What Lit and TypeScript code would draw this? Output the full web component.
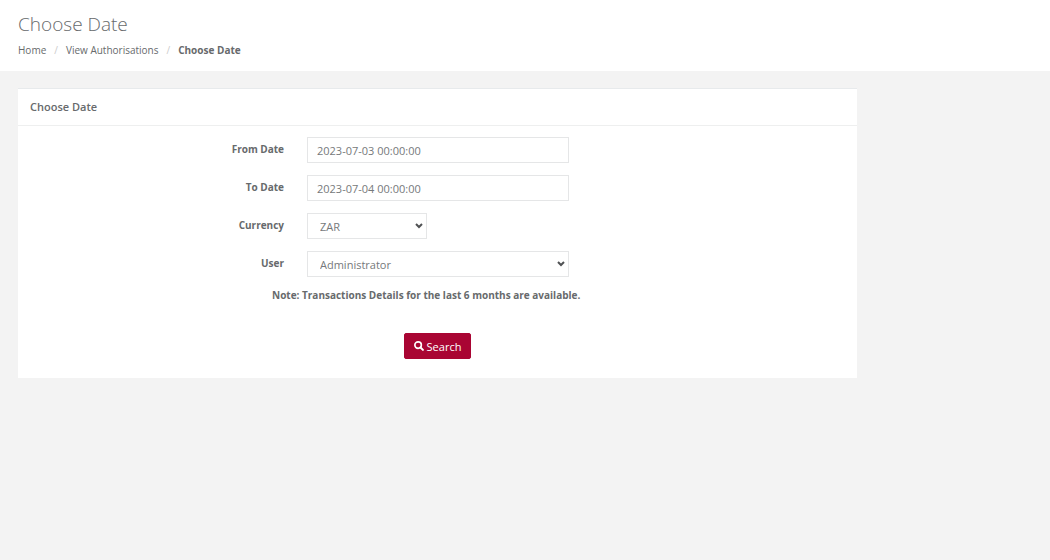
import { LitElement, html, css } from "lit";
import { customElement } from "lit/decorators.js";

@customElement("app-root")
export class AppRoot extends LitElement {
  static styles = css`
    :host {
      display: block;
      min-height: 100vh;
      background: #f3f3f3;
      color: #676a6c;
      font-family: "Open Sans", "Noto Sans", sans-serif;
      font-size: 11px;
      line-height: 18px;
    }
    * {
      box-sizing: border-box;
    }
    .heading {
      background: #fff;
      padding: 12px 18px;
    }
    h1 {
      margin: 0 0 4px;
      font-size: 19px;
      line-height: 25px;
      font-weight: 300;
    }
    .crumbs {
      display: flex;
      margin: 0;
      padding: 0;
      list-style: none;
      font-size: 10px;
    }
    .crumbs li + li::before {
      content: "/";
      color: #ccc;
      font-weight: 400;
      padding: 0 8px;
    }
    .crumbs a {
      color: inherit;
      text-decoration: none;
    }
    .current {
      font-weight: 700;
    }
    .content {
      display: grid;
      grid-template-columns: 839fr 175fr;
      padding: 17px 18px;
    }
    .panel {
      background: #fff;
      border-top: 1px solid #e7eaec;
    }
    h2 {
      margin: 0;
      padding: 9px 12px;
      border-bottom: 1px solid #eeefef;
      font-size: 11px;
      line-height: 18px;
      font-weight: 600;
    }
    form {
      display: flex;
      flex-direction: column;
      gap: 12px;
      padding: 11px 0 19px;
    }
    .row {
      display: grid;
      grid-template-columns: 266fr 262fr 265fr;
      column-gap: 23px;
    }
    .row label {
      text-align: right;
      font-size: 10px;
      line-height: 24px;
      font-weight: 700;
    }
    .control {
      width: 100%;
      height: 26px;
      margin: 0;
      padding: 0 9px;
      border: 1px solid #e5e6e7;
      border-radius: 0;
      background: #fff;
      color: #76797b;
      font: 11px "Open Sans", "Noto Sans", sans-serif;
    }
    select.control {
      appearance: none;
      padding: 0 16px 0 12px;
      background: #fff
        url("data:image/svg+xml,%3Csvg xmlns='http://www.w3.org/2000/svg' width='8' height='6' fill='none' stroke='%23505254' stroke-width='2'%3E%3Cpath d='M1 1l3 3 3-3'/%3E%3C/svg%3E")
        no-repeat right 3px center;
    }
    select.short {
      width: 120px;
    }
    .note {
      margin: 0;
      padding-left: 254px;
      font-size: 10px;
      line-height: 12px;
      font-weight: 700;
    }
    .actions {
      display: flex;
      justify-content: center;
      padding-top: 20px;
    }
    button {
      display: flex;
      align-items: center;
      gap: 3px;
      height: 26px;
      padding: 0 9px;
      border: 1px solid #a90533;
      border-radius: 2px;
      background: #a90533;
      color: #fff;
      font: 11px "Open Sans", "Noto Sans", sans-serif;
    }
    svg {
      width: 10px;
      height: 10px;
      fill: none;
      stroke: currentColor;
    }
  `;

  render() {
    return html`
      <header class="heading">
        <h1>Choose Date</h1>
        <nav aria-label="Breadcrumb">
          <ol class="crumbs">
            <li><a href="#home">Home</a></li>
            <li><a href="#authorisations">View Authorisations</a></li>
            <li class="current" aria-current="page">Choose Date</li>
          </ol>
        </nav>
      </header>
      <main class="content">
        <section class="panel">
          <h2>Choose Date</h2>
          <form @submit=${(e: Event) => e.preventDefault()}>
            <div class="row">
              <label for="from">From Date</label>
              <input class="control" id="from" type="text" .value=${"2023-07-03 00:00:00"} />
            </div>
            <div class="row">
              <label for="to">To Date</label>
              <input class="control" id="to" type="text" .value=${"2023-07-04 00:00:00"} />
            </div>
            <div class="row">
              <label for="currency">Currency</label>
              <select class="control short" id="currency">
                <option>ZAR</option>
              </select>
            </div>
            <div class="row">
              <label for="user">User</label>
              <select class="control" id="user">
                <option>Administrator</option>
              </select>
            </div>
            <p class="note">Note: Transactions Details for the last 6 months are available.</p>
            <div class="actions">
              <button type="submit">
                <svg viewBox="0 0 11 11" aria-hidden="true">
                  <circle cx="4.5" cy="4.5" r="3.6" stroke-width="1.8" />
                  <path d="M7.2 7.2 L9.8 9.8" stroke-width="2.2" stroke-linecap="round" />
                </svg>
                Search
              </button>
            </div>
          </form>
        </section>
      </main>
    `;
  }
}
